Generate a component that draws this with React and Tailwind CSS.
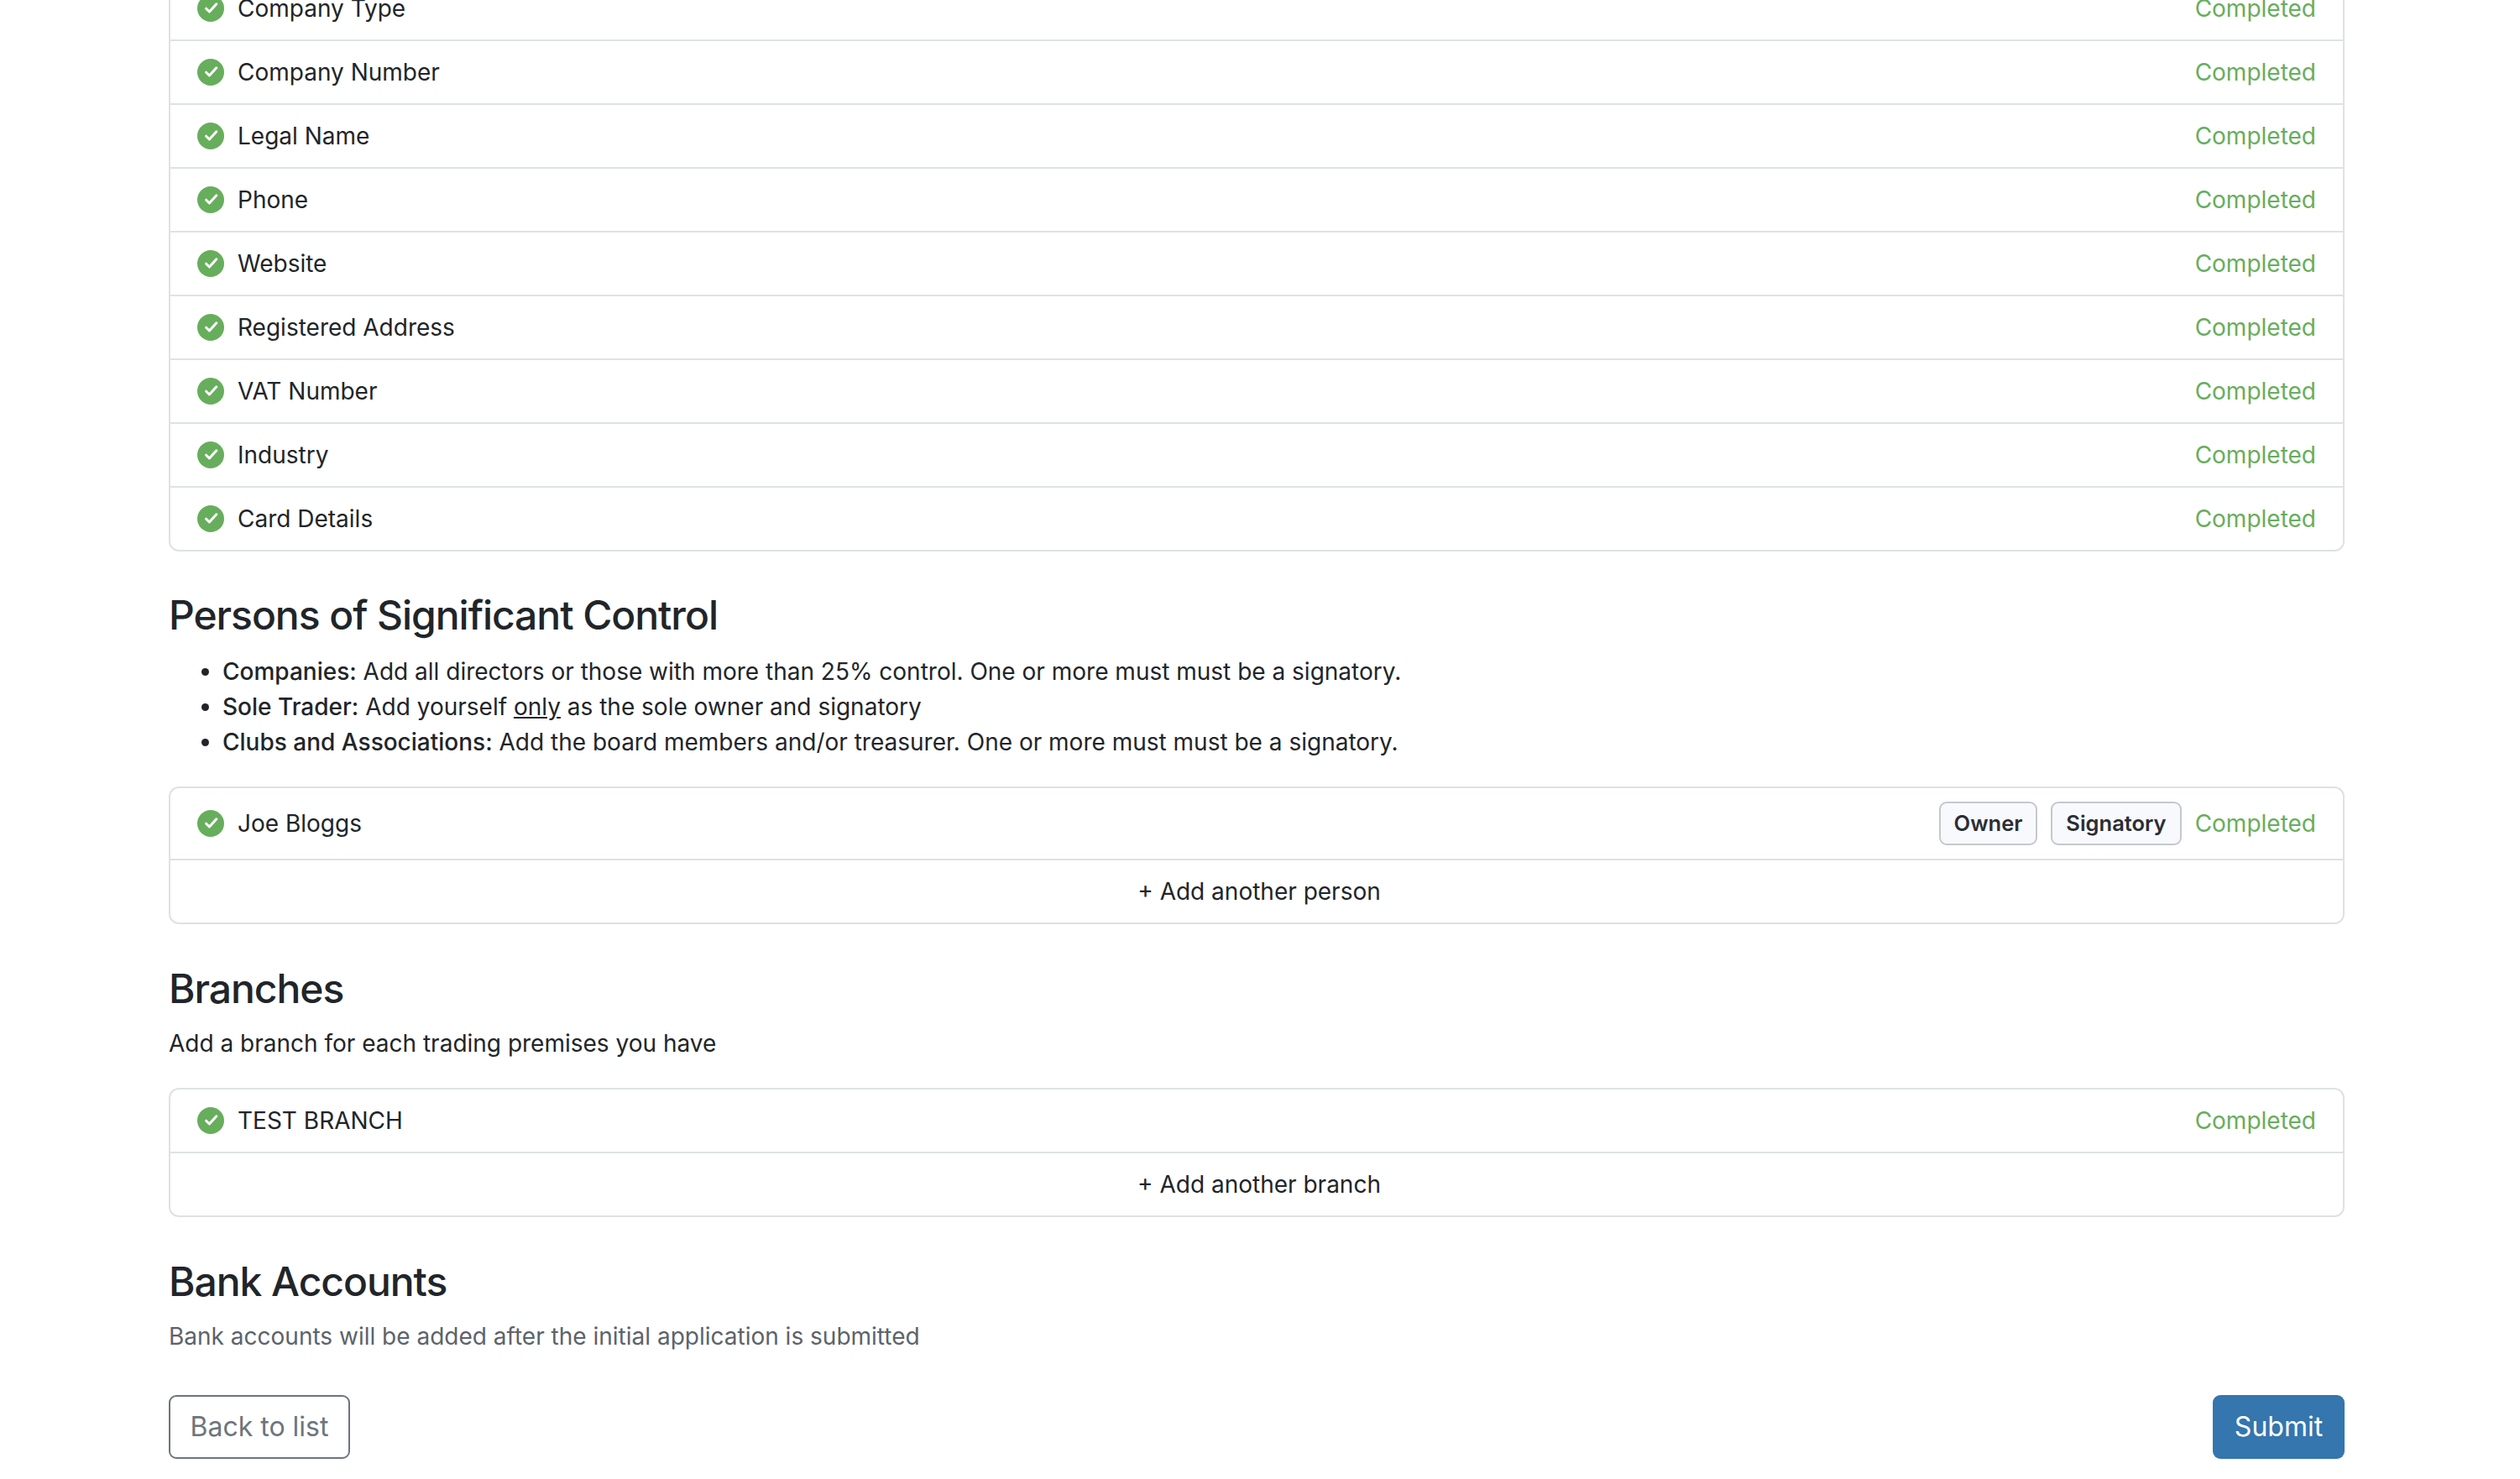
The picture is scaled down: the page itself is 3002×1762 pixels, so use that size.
const companyRows = [
  'Company Type',
  'Company Number',
  'Legal Name',
  'Phone',
  'Website',
  'Registered Address',
  'VAT Number',
  'Industry',
  'Card Details',
]

function CheckIcon() {
  return (
    <svg width="32" height="32" viewBox="0 0 32 32" className="shrink-0">
      <circle cx="16" cy="16" r="16" fill="#67ae5c" />
      <path d="M10.6 16.2 L14.4 20 L22.8 10.8" fill="none" stroke="#fff" strokeWidth="3" strokeLinecap="round" strokeLinejoin="round" />
    </svg>
  )
}

function Badge({ children }) {
  return (
    <span className="flex h-[52px] items-center rounded-[9px] border-2 border-[#c5c8cc] bg-[#f8f9fd] px-[16px] text-[25.5px] font-semibold text-[#2b2d33]">
      {children}
    </span>
  )
}

function Row({ label, tall, first, children }) {
  return (
    <div className={`flex items-center px-[32px] ${tall ? 'h-[84px]' : 'h-[74px]'} ${first ? '' : 'box-content border-t-2 border-[#dee2e6]'}`}>
      <CheckIcon />
      <span className="ml-[16px]">{label}</span>
      <div className="ml-auto flex items-center gap-[16px]">
        {children}
        <span className="text-[#67ae5c]">Completed</span>
      </div>
    </div>
  )
}

function AddRow({ children }) {
  return (
    <div className="box-content flex h-[74px] items-center justify-center border-t-2 border-[#dee2e6] pl-[6px]">{children}</div>
  )
}

function Box({ className, children }) {
  return <div className={`overflow-hidden rounded-[12px] border-2 border-[#dee2e6] ${className ?? ''}`}>{children}</div>
}

function Heading({ className, children }) {
  return <h2 className={`text-[48px] font-medium leading-[56px] tracking-[-1.05px] ${className}`}>{children}</h2>
}

export default function App() {
  return (
    <div className="h-[1762px] overflow-hidden bg-white font-['Inter',sans-serif] text-[28px] leading-[42px] text-[#212529]">
      <div className="-mt-[29px] ml-[201px] w-[2592px]">
        <Box>
          {companyRows.map((label, i) => (
            <Row key={label} label={label} first={i === 0} />
          ))}
        </Box>

        <Heading className="mt-[48px]">Persons of Significant Control</Heading>
        <ul className="mt-[18px] list-disc pl-[64px]">
          <li>
            <span className="font-[530]">Companies:</span> Add all directors or those with more than 25% control. One or more must must be a signatory.
          </li>
          <li>
            <span className="font-[530]">Sole Trader:</span> Add yourself <span className="underline">only</span> as the sole owner and signatory
          </li>
          <li>
            <span className="font-[530]">Clubs and Associations:</span> Add the board members and/or treasurer. One or more must must be a signatory.
          </li>
        </ul>

        <Box className="mt-[32px]">
          <Row label="Joe Bloggs" tall first>
            <Badge>Owner</Badge>
            <Badge>Signatory</Badge>
          </Row>
          <AddRow>+ Add another person</AddRow>
        </Box>

        <Heading className="mt-[49px]">Branches</Heading>
        <p className="mt-[16px]">Add a branch for each trading premises you have</p>

        <Box className="mt-[32px]">
          <Row label="TEST BRANCH" first />
          <AddRow>+ Add another branch</AddRow>
        </Box>

        <Heading className="mt-[49px]">Bank Accounts</Heading>
        <p className="mt-[16px] text-[#5c636a]">Bank accounts will be added after the initial application is submitted</p>

        <div className="mt-[49px] flex items-center justify-between text-[32px]">
          <button className="flex h-[76px] w-[216px] items-center justify-center rounded-[9px] border-2 border-[#6c757d] text-[#6c757d]">
            Back to list
          </button>
          <button className="flex h-[76px] w-[157px] items-center justify-center rounded-[9px] bg-[#3476ad] text-white">
            Submit
          </button>
        </div>
      </div>
    </div>
  )
}
